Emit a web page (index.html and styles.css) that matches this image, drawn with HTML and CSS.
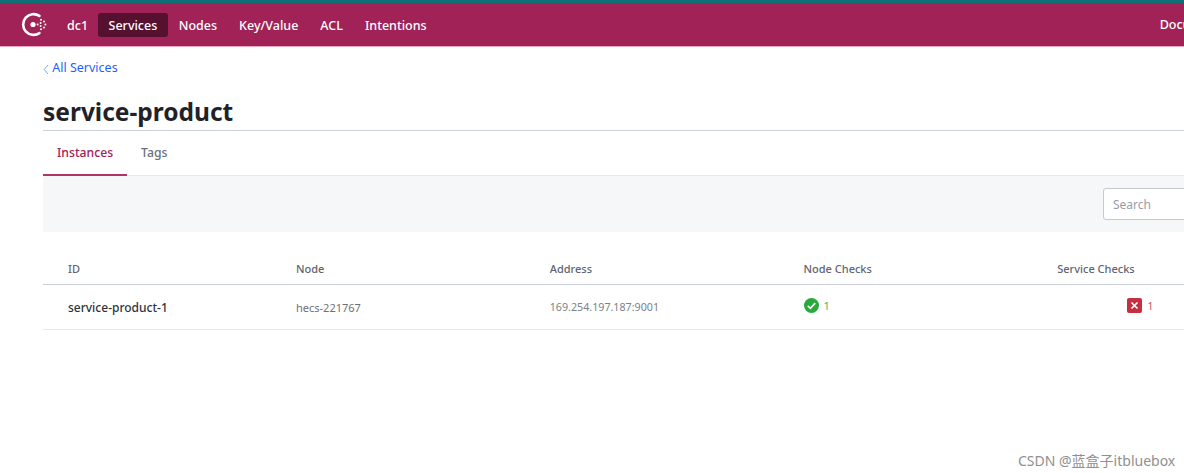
FILE: index.html
```html
<!DOCTYPE html>
<html lang="en">
<head>
    <meta charset="UTF-8">
    <meta name="viewport" content="width=device-width, initial-scale=1.0">
    <title>service-product - Consul</title>
    <link rel="stylesheet" href="styles.css">
</head>
<body>
    <!-- top navigation -->
    <header class="topbar">
        <svg class="logo" width="26" height="25" viewBox="0 0 26 25" fill="none">
            <path d="M18.4 3.9A10.4 10.4 0 1 0 18.4 21.1" stroke="#fff" stroke-width="2.6" stroke-linecap="round"/>
            <circle cx="12" cy="12.5" r="2.6" fill="#fff"/>
            <g fill="#fff">
                <circle cx="16.6" cy="12.5" r="1"/>
                <circle cx="20" cy="7.8" r="1"/>
                <circle cx="23" cy="9.6" r="1"/>
                <circle cx="19.6" cy="11" r="1"/>
                <circle cx="24.4" cy="12.5" r="1"/>
                <circle cx="19.6" cy="14" r="1"/>
                <circle cx="23" cy="15.4" r="1"/>
                <circle cx="20" cy="17.2" r="1"/>
            </g>
        </svg>
        <nav class="mainnav">
            <a class="dc" href="#">dc1</a>
            <a class="active" href="#">Services</a>
            <a href="#">Nodes</a>
            <a href="#">Key/Value</a>
            <a href="#">ACL</a>
            <a href="#">Intentions</a>
        </nav>
        <a class="docs" href="#">Documentation</a>
    </header>

    <main class="content">
        <a class="backlink" href="#">
            <svg width="6" height="10" viewBox="0 0 6 10" fill="none"><path d="M5 1 1.2 5.5 5 10" stroke="#7fa3f5" stroke-width="1"/></svg>
            All Services
        </a>
        <h1>service-product</h1>

        <div class="tabs">
            <a class="tab current" href="#">Instances</a>
            <a class="tab" href="#">Tags</a>
        </div>

        <div class="filterbar">
            <input class="search" type="text" placeholder="Search">
        </div>

        <table class="instances">
            <thead>
                <tr>
                    <th class="col-id">ID</th>
                    <th>Node</th>
                    <th>Address</th>
                    <th>Node Checks</th>
                    <th>Service Checks</th>
                </tr>
            </thead>
            <tbody>
                <tr>
                    <td class="name">service-product-1</td>
                    <td>hecs-221767</td>
                    <td class="address">169.254.197.187:9001</td>
                    <td>
                        <span class="check passing">
                            <svg width="15" height="15" viewBox="0 0 15 15">
                                <circle cx="7.5" cy="7.5" r="7.5" fill="#28a93c"/>
                                <path d="M3.8 7.8 6.4 10.3 11.2 5.2" fill="none" stroke="#fff" stroke-width="1.7"/>
                            </svg>
                            1
                        </span>
                    </td>
                    <td>
                        <span class="check critical">
                            <svg width="15" height="15" viewBox="0 0 15 15">
                                <rect width="15" height="15" rx="2" fill="#c72e42"/>
                                <path d="M4.5 4.5 10.5 10.5M10.5 4.5 4.5 10.5" fill="none" stroke="#fff" stroke-width="1.7"/>
                            </svg>
                            1
                        </span>
                    </td>
                </tr>
            </tbody>
        </table>
    </main>

    <div class="watermark">CSDN @蓝盒子itbluebox</div>
</body>
</html>
```

FILE: styles.css
```css
/* page */
html, body {
    margin: 0;
    padding: 0;
    width: 100%;
    height: 100%;
    overflow: hidden;
    background: #fff;
    font-family: "Noto Sans", "Noto Sans CJK SC", sans-serif;
    color: #1f2328;
}

a {
    text-decoration: none;
}

/* top navigation */
.topbar {
    display: flex;
    align-items: center;
    box-sizing: border-box;
    width: 1300px;
    height: 47px;
    padding-left: 21px;
    background: #a02257;
    border-top: 3px solid #0f6f78;
    border-bottom: 1px solid #e9a8c2;
}

.logo {
    flex: none;
}

.mainnav {
    display: flex;
    align-items: center;
    margin-left: 10px;
}

.mainnav a {
    padding: 0 11px;
    height: 24px;
    line-height: 25px;
    border-radius: 3px;
    color: #fff;
    font-size: 12.5px;
    font-weight: 500;
}

.mainnav a.dc {
    padding: 0 10px;
}

.mainnav a.active {
    padding: 0 10.5px;
    background: #561030;
}

.docs {
    margin-left: 722px;
    line-height: 25px;
    color: #fff;
    font-size: 12.5px;
    font-weight: 500;
}

/* page body */
.content {
    width: 1250px;
    margin-left: 43px;
}

.backlink {
    display: block;
    margin-top: 10px;
    height: 20px;
    line-height: 22px;
    color: #1f5fff;
    font-size: 12.5px;
}

.backlink svg {
    margin-bottom: -2px;
}

h1 {
    margin: 16px 0 0;
    height: 37px;
    line-height: 38px;
    font-size: 24.5px;
    font-weight: 700;
    color: #1f2328;
    border-bottom: 1px solid #ccd0da;
}

/* tabs */
.tabs {
    display: flex;
    height: 44px;
    border-bottom: 1px solid #e8e9ee;
}

.tab {
    box-sizing: border-box;
    height: 45px;
    padding: 0 14px;
    line-height: 43px;
    font-size: 12.2px;
    font-weight: 500;
    color: #6a7079;
}

.tab.current {
    color: #a02257;
    border-bottom: 2px solid #b03468;
}

/* search strip */
.filterbar {
    display: flex;
    align-items: center;
    height: 56px;
    padding-left: 1060px;
    background: #f6f7f9;
}

.search {
    box-sizing: border-box;
    width: 180px;
    height: 32px;
    padding: 0 9px;
    border: 1px solid #c5c9d3;
    border-radius: 3px;
    background: #fff;
    font-family: inherit;
    font-size: 12px;
}

.search::placeholder {
    color: #989da6;
}

/* instances table */
.instances {
    margin-top: 20px;
    border-collapse: collapse;
    table-layout: fixed;
    width: 1268px;
}

.instances th {
    width: 253.75px;
    height: 32px;
    padding: 0;
    text-align: left;
    font-size: 11px;
    font-weight: 500;
    color: #5f6570;
    border-bottom: 1px solid #ccd0da;
}

.instances th.col-id {
    width: 253px;
    padding-left: 25px;
    box-sizing: border-box;
}

.instances td {
    height: 44px;
    padding: 0;
    font-size: 11px;
    color: #6b717a;
    border-bottom: 1px solid #e8e9ee;
}

.instances td.name {
    padding-left: 25px;
    font-size: 12px;
    font-weight: 500;
    color: #2f343a;
}

.instances td.address {
    font-size: 10.7px;
    color: #7b8189;
}

.check {
    display: inline-flex;
    align-items: center;
    gap: 5px;
    font-size: 11px;
    margin-bottom: 4px;
}

.check.passing {
    color: #45b45a;
}

.check.critical {
    color: #d0566a;
    margin-left: 70px;
}

/* CSDN overlay */
.watermark {
    position: absolute;
    left: 1018px;
    top: 451px;
    font-size: 14px;
    line-height: 19px;
    color: #8f8f8f;
    white-space: nowrap;
}
```
